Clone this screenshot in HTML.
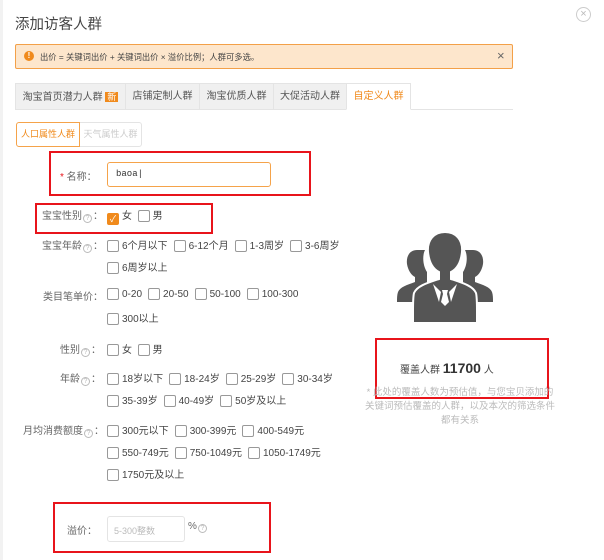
<!DOCTYPE html>
<html><head><meta charset="utf-8"><style>
*{box-sizing:border-box;margin:0;padding:0}
body{width:604px;height:560px;background:#fff;font-family:"Liberation Sans","Noto Sans CJK SC",sans-serif;color:#555;font-size:10px;position:relative;overflow:hidden}
.a{position:absolute;white-space:nowrap}
.rb{position:absolute;border:2px solid #e8141b}
.cb{display:inline-block;width:12px;height:12px;border:1px solid #999;border-radius:2px;vertical-align:-3px;margin-right:3px}
.row span.o{margin-right:6px}
.q{display:inline-block;width:9px;height:9px;border:1px solid #bbb;border-radius:50%;font-size:7px;line-height:7px;text-align:center;color:#bbb;vertical-align:-1px;margin:0 1px}
.tab{position:absolute;top:83px;height:27px;background:#f0f0f0;border:1px solid #e4e4e4;line-height:26px;text-align:center;font-size:10px;color:#555;white-space:nowrap}
</style></head><body>
<div style="position:absolute;left:0;top:0;width:3px;height:560px;background:#f2f2f2"></div>
<div class="a" style="left:15px;top:13px;font-size:14.5px;color:#444">添加访客人群</div>
<div class="a" style="left:576px;top:7px;width:15px;height:15px;border:1px solid #ccc;border-radius:50%;color:#bbb;font-size:11px;line-height:13px;text-align:center">×</div>
<div class="a" style="left:15px;top:44px;width:498px;height:25px;background:#fde6cc;border:1px solid #f3a048;border-radius:2px"></div>
<div class="a" style="left:24px;top:51px;width:10px;height:10px;border-radius:50%;background:#f08a1c;color:#fff;font-size:8px;line-height:10px;text-align:center;font-weight:bold">!</div>
<div class="a" style="left:40px;top:51px;font-size:8.3px;color:#444">出价 = 关键词出价 + 关键词出价 × 溢价比例；人群可多选。</div>
<div class="a" style="left:497px;top:48px;font-size:13px;color:#666">×</div>
<div class="a" style="left:15px;top:109px;width:498px;height:1px;background:#e4e4e4"></div>
<div class="tab" style="left:15px;width:111px">淘宝首页潜力人群 <span style="background:#f08a1c;color:#fff;padding:0 2px;font-size:9px">新</span></div>
<div class="tab" style="left:125px;width:75px">店铺定制人群</div>
<div class="tab" style="left:199px;width:75px">淘宝优质人群</div>
<div class="tab" style="left:273px;width:74px">大促活动人群</div>
<div class="tab" style="left:346px;width:65px;background:#fff;border-bottom-color:#fff;color:#f08a1c">自定义人群</div>
<div class="a" style="left:79px;top:122px;width:63px;height:25px;border:1px solid #e4e4e4;border-radius:0 3px 3px 0;color:#ccc;font-size:9px;line-height:23px;text-align:center">天气属性人群</div>
<div class="a" style="left:16px;top:122px;width:64px;height:25px;border:1px solid #f5a34a;border-radius:3px 0 0 3px;color:#f08a1c;font-size:9px;line-height:23px;text-align:center">人口属性人群</div>

<div class="rb" style="left:49px;top:151px;width:262px;height:45px"></div>
<div class="a" style="left:60px;top:168px;color:#666"><span style="color:#e8141b">*</span> 名称：</div>
<div class="a" style="left:107px;top:162px;width:164px;height:25px;border:1px solid #f5a34a;border-radius:3px;padding:6px 8px;font-family:'Liberation Mono',monospace;font-size:9px;color:#333">baoa|</div>

<div class="rb" style="left:35px;top:203px;width:178px;height:31px"></div>
<div class="a" style="left:42px;top:207px;color:#666">宝宝性别<span class="q">?</span>：</div>
<div class="a" style="left:107px;top:207px;color:#444"><span class="cb" style="background:#f08a1c;border-color:#f08a1c;color:#fff;font-size:9px;line-height:10px;text-align:center">✓</span>女 &nbsp;<span class="cb"></span>男</div>

<div class="a" style="left:42px;top:237px;color:#666">宝宝年龄<span class="q">?</span>：</div>
<div class="a row" style="left:107px;top:237px;color:#444"><span class="cb"></span><span class="o">6个月以下</span><span class="cb"></span><span class="o">6-12个月</span><span class="cb"></span><span class="o">1-3周岁</span><span class="cb"></span>3-6周岁</div>
<div class="a" style="left:107px;top:259px;color:#444"><span class="cb"></span>6周岁以上</div>

<div class="a" style="left:43px;top:288px;color:#666">类目笔单价：</div>
<div class="a row" style="left:107px;top:288px;color:#444"><span class="cb"></span><span class="o">0-20</span><span class="cb"></span><span class="o">20-50</span><span class="cb"></span><span class="o">50-100</span><span class="cb"></span>100-300</div>
<div class="a" style="left:107px;top:310px;color:#444"><span class="cb"></span>300以上</div>

<div class="a" style="left:60px;top:341px;color:#666">性别<span class="q">?</span>：</div>
<div class="a" style="left:107px;top:341px;color:#444"><span class="cb"></span>女 &nbsp;<span class="cb"></span>男</div>

<div class="a" style="left:60px;top:370px;color:#666">年龄<span class="q">?</span>：</div>
<div class="a row" style="left:107px;top:370px;color:#444"><span class="cb"></span><span class="o">18岁以下</span><span class="cb"></span><span class="o">18-24岁</span><span class="cb"></span><span class="o">25-29岁</span><span class="cb"></span>30-34岁</div>
<div class="a row" style="left:107px;top:392px;color:#444"><span class="cb"></span><span class="o">35-39岁</span><span class="cb"></span><span class="o">40-49岁</span><span class="cb"></span>50岁及以上</div>

<div class="a" style="left:23px;top:422px;color:#666">月均消费额度<span class="q">?</span>：</div>
<div class="a row" style="left:107px;top:422px;color:#444"><span class="cb"></span><span class="o">300元以下</span><span class="cb"></span><span class="o">300-399元</span><span class="cb"></span>400-549元</div>
<div class="a row" style="left:107px;top:444px;color:#444"><span class="cb"></span><span class="o">550-749元</span><span class="cb"></span><span class="o">750-1049元</span><span class="cb"></span>1050-1749元</div>
<div class="a" style="left:107px;top:466px;color:#444"><span class="cb"></span>1750元及以上</div>

<div class="rb" style="left:53px;top:502px;width:218px;height:51px"></div>
<div class="a" style="left:67px;top:522px;color:#666">溢价：</div>
<div class="a" style="left:107px;top:516px;width:78px;height:26px;border:1px solid #e4e4e4;border-radius:3px;padding:7px 6px;color:#bbb;font-size:9px">5-300整数</div>
<div class="a" style="left:188px;top:521px;color:#666">%<span class="q">?</span></div>

<svg class="a" style="left:395px;top:232px" width="100" height="92" viewBox="0 0 100 92">
<g fill="#555">
<path d="M22 18c-7 0-11 6-10 14 1 6 4 11 8 13v5c-8 3-15 5-17 10-1 3-1 6-1 10h30V40c-4-6-5-16-2-22z"/>
<path d="M78 18c7 0 11 6 10 14-1 6-4 11-8 13v5c8 3 15 5 17 10 1 3 1 6 1 10H68V40c4-6 5-16 2-22z"/>
</g>
<path fill="#555" stroke="#fff" stroke-width="2" d="M50 0c-11 0-18 8-17 20 1 10 5 17 11 20v7c-12 4-22 7-25 14-1 4-1 10-1 18v12h64V79c0-8 0-14-1-18-3-7-13-10-25-14v-7c6-3 10-10 11-20 1-12-6-20-17-20z"/>
<path fill="#fff" d="M47 58h6l-1 4 2 8-4 4-4-4 2-8z"/>
<path fill="#fff" d="M38 52l8 8-2 10zM62 52l-8 8 2 10z"/>
</svg>

<div class="rb" style="left:375px;top:338px;width:174px;height:61px"></div>
<div class="a" style="left:400px;top:360px;color:#444;font-size:10px">覆盖人群 <b style="font-size:14px;color:#333">11700</b> 人</div>
<div class="a" style="left:362px;top:386px;width:196px;text-align:center;white-space:normal;color:#bbb;font-size:9.5px;line-height:14px">* 此处的覆盖人数为预估值，与您宝贝添加的关键词预估覆盖的人群，以及本次的筛选条件都有关系</div>
</body></html>
